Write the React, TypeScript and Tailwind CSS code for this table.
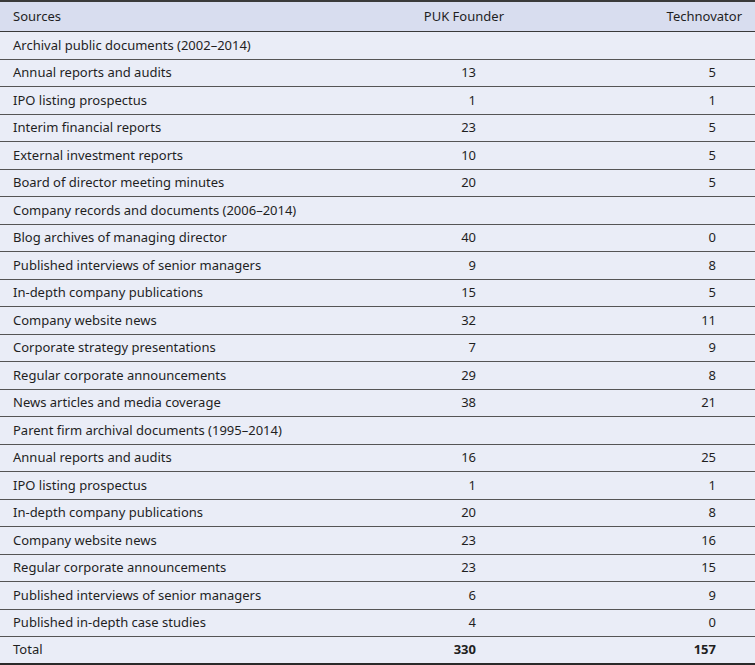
import React from "react";

type Row = { label: string; a?: string; b?: string; kind?: "section" | "total" };

const rows: Row[] = [
  { label: "Archival public documents (2002–2014)", kind: "section" },
  { label: "Annual reports and audits", a: "13", b: "5" },
  { label: "IPO listing prospectus", a: "1", b: "1" },
  { label: "Interim financial reports", a: "23", b: "5" },
  { label: "External investment reports", a: "10", b: "5" },
  { label: "Board of director meeting minutes", a: "20", b: "5" },
  { label: "Company records and documents (2006–2014)", kind: "section" },
  { label: "Blog archives of managing director", a: "40", b: "0" },
  { label: "Published interviews of senior managers", a: "9", b: "8" },
  { label: "In-depth company publications", a: "15", b: "5" },
  { label: "Company website news", a: "32", b: "11" },
  { label: "Corporate strategy presentations", a: "7", b: "9" },
  { label: "Regular corporate announcements", a: "29", b: "8" },
  { label: "News articles and media coverage", a: "38", b: "21" },
  { label: "Parent firm archival documents (1995–2014)", kind: "section" },
  { label: "Annual reports and audits", a: "16", b: "25" },
  { label: "IPO listing prospectus", a: "1", b: "1" },
  { label: "In-depth company publications", a: "20", b: "8" },
  { label: "Company website news", a: "23", b: "16" },
  { label: "Regular corporate announcements", a: "23", b: "15" },
  { label: "Published interviews of senior managers", a: "6", b: "9" },
  { label: "Published in-depth case studies", a: "4", b: "0" },
  { label: "Total", a: "330", b: "157", kind: "total" },
];

export default function App() {
  return (
    <div
      className="w-[755px] h-[665px] bg-white text-[#1f1f1f] text-[13px] leading-none"
      style={{ fontFamily: '"Noto Sans", "Open Sans", sans-serif' }}
    >
      <div className="grid grid-cols-[400px_117px_238px] h-[32px] items-center bg-[#d8ddef] border-t-2 border-b border-[#3a3a3a]">
        <div className="pl-[13px]">Sources</div>
        <div className="text-right pr-[13px]">PUK Founder</div>
        <div className="text-right pr-[13px]">Technovator</div>
      </div>
      {rows.map((r, i) => (
        <div
          key={i}
          className={
            r.kind === "total"
              ? "grid grid-cols-[400px_117px_238px] h-[27.5px] items-center bg-[#eaedf7] border-b-2 border-[#2a2a2a]"
              : "grid grid-cols-[400px_117px_238px] h-[27.5px] items-center bg-[#eaedf7] border-b border-[#555]"
          }
        >
          <div className="pl-[13px]">{r.label}</div>
          <div className={r.kind === "total" ? "text-right pr-[41px] font-bold" : "text-right pr-[41px]"}>
            {r.a ?? ""}
          </div>
          <div className={r.kind === "total" ? "text-right pr-[39px] font-bold" : "text-right pr-[39px]"}>
            {r.b ?? ""}
          </div>
        </div>
      ))}
    </div>
  );
}
